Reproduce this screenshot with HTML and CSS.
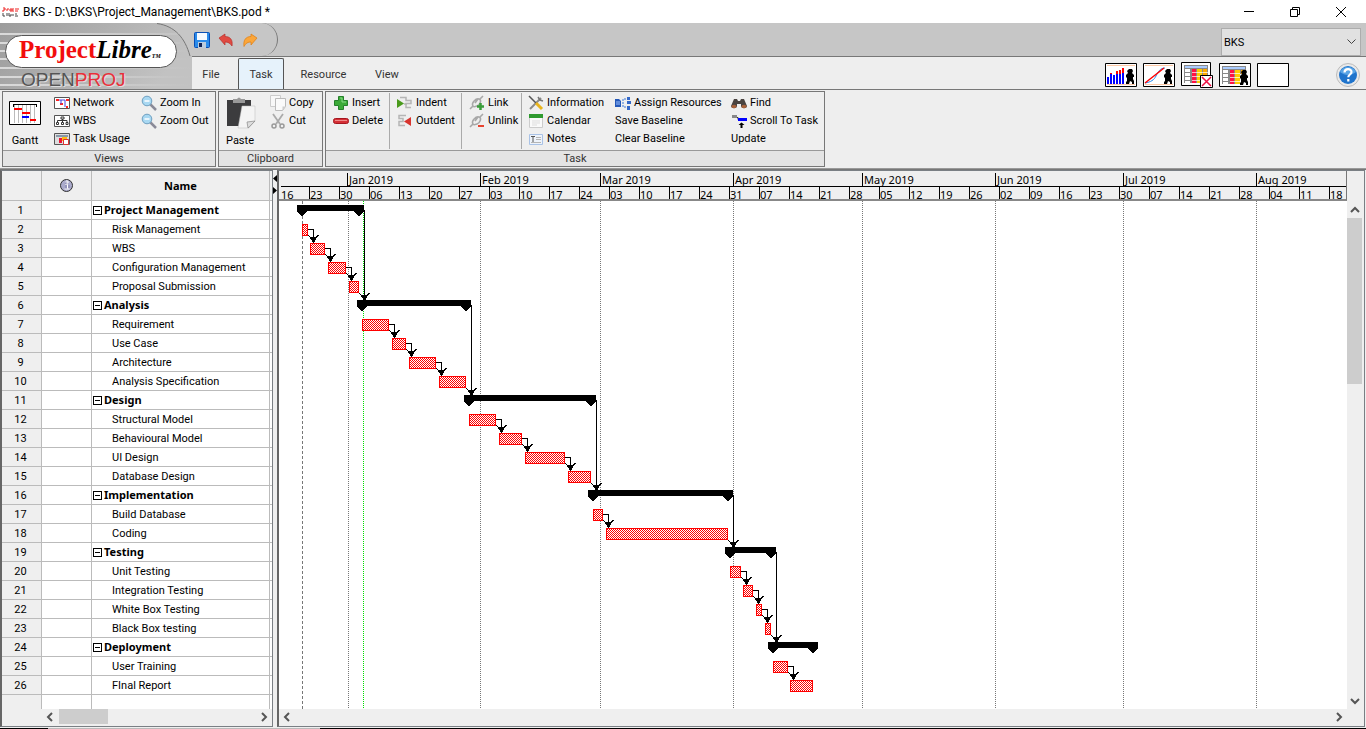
FILE: index.html
```html
<!DOCTYPE html>
<html lang="en">
<head>
<meta charset="utf-8">
<title>BKS - ProjectLibre</title>
<link rel="stylesheet" href="styles.css">
</head>
<body>
<header class="titlebar">
  <svg class="app-icon" width="17" height="10" viewBox="0 0 17 10"><path d="M1 1h2v2H1v2M5 2v2M5 2h2M8 2h2v2H8zM11 1v4M13 2h2M13 4h3M16 1v2" stroke="#e22" fill="none"/><path d="M1 6v3h2M5 6v3M7 6v3h2V7M11 7v2M13 7h2M13 9h3" stroke="#444" fill="none"/></svg>
  <h1 class="title">BKS - D:\BKS\Project_Management\BKS.pod *</h1>
  <div class="window-controls">
    <button class="wc" aria-label="Minimize"><svg width="12" height="12"><path d="M1 5.5h10" stroke="#000"/></svg></button>
    <button class="wc" aria-label="Restore"><svg width="12" height="12"><path d="M1.5 3.500h7v7h-7zM3.500 3.500v-2h7v7h-2" fill="none" stroke="#000"/></svg></button>
    <button class="wc" aria-label="Close"><svg width="12" height="12"><path d="M1 1l10 10M11 1L1 11" stroke="#000"/></svg></button>
  </div>
</header>

<div class="banner">
  <div class="brand">
    <svg class="brand-bg" width="192" height="67" viewBox="0 0 192 67">
      <defs>
        <linearGradient id="bg" x1="0" x2="1" y1="0" y2="0.3"><stop offset="0" stop-color="#9c9c9c"/><stop offset="1" stop-color="#c2c2c2"/></linearGradient>
        <linearGradient id="st" x1="0" x2="1" y1="0" y2="0"><stop offset="0" stop-color="#dadada"/><stop offset="1" stop-color="#c2c2c2"/></linearGradient>
      </defs>
      <path d="M0 0h192v67H0z" fill="url(#bg)"/>
      <path d="M0 10h180v2H0zM0 19h180v2H0zM0 27h188v2H0zM0 35h192v2H0zM0 44h192v2H0zM0 53h192v2H0zM0 61h192v2H0z" fill="url(#st)"/>
      <path d="M157 0C175 3 185 15 190 33H192V0z" fill="#c6c6c6"/>
      <path d="M157 0.500C175 3 185 15 190 33" fill="none" stroke="#777"/>
      <path d="M0 66.500h192" stroke="#777"/>
    </svg>
    <div class="logo"><span class="logo-red">Project</span><span class="logo-black">Libre</span><span class="logo-tm">TM</span></div>
    <div class="sublogo">OPEN<span>PROJ</span></div>
  </div>
  <div class="quickbar">
    <div class="quick-actions">
      <button aria-label="Save"><svg width="16" height="16"><rect x=".5" y=".5" width="15" height="15" rx="1" fill="#2a8bea" stroke="#0a4fb5"/><path d="M3 1h10v7H3z" fill="#f4f9ff"/><path d="M4 10h8v6H4z" fill="#bcd"/><path d="M5 11h3v4H5z" fill="#125"/></svg></button>
      <button aria-label="Undo"><svg width="16" height="16"><path d="M1 6l6-4v2.500c5 0 8 3 7 9.500-2-3-4-4-7-4v3z" fill="#e04a42" stroke="#b62f2a" stroke-width=".7"/></svg></button>
      <button aria-label="Redo"><svg width="16" height="16"><path d="M15 6L9 2v2.500C4 4.500 1 8 2 14.500c2-3.500 4-4.500 7-4.500v3z" fill="#fba63a" stroke="#dd7d12" stroke-width=".7"/></svg></button>
    </div>
    <select class="project-select" aria-label="Project"><option>BKS</option></select>
  </div>
  <nav class="tabs">
    <button class="tab tab-file">File</button>
    <button class="tab tab-active">Task</button>
    <button class="tab tab-resource">Resource</button>
    <button class="tab tab-view">View</button>
    <div class="view-icons">
      <button aria-label="Histogram"><svg width="32" height="24"><path d="M.5.500h31v23H.5z" fill="#fff" stroke="#000"/><path d="M2 2.500h28M2 21.500h28" stroke="#fdc9a6"/><path d="M3 21v-7M6 21V11M9 21v-9M12 21V11M15 21V11M18 21V10" stroke="#00f" stroke-width="2"/><path d="M6 11v-1M12 11V8M15 11V7M18 10V5" stroke="#f00" stroke-width="2"/><path d="M24 6h3l1 2-1 2 2 2v2h-1v2l1 2v3h-2v-2l-2-1-1 3h-3v-2l1-1v-3l-1-1v-2l2-2-1-2z"/></svg></button>
      <button aria-label="Charts"><svg width="32" height="24"><path d="M.5.500h31v23H.5z" fill="#fff" stroke="#000"/><path d="M2 2.500h28M2 21.500h28" stroke="#fdc9a6"/><path d="M2 20c6-1 9-3 11-7s4-8 9-8" stroke="#28e" fill="none"/><path d="M2 20l14-11 5-4" stroke="#f00" fill="none" stroke-width="1.500"/><path d="M24 6h3l1 2-1 2 2 2v2h-1v2l1 2v3h-2v-2l-2-1-1 3h-3v-2l1-1v-3l-1-1v-2l2-2-1-2z"/></svg></button>
      <button aria-label="Hide task usage"><svg width="32" height="26"><path d="M.5.500h29v23H.5z" fill="#fff" stroke="#000"/><path d="M3 3h24v18H3z" fill="#888"/><path d="M4 4h22v2H4z" fill="#acf"/><path d="M4 7h5v14H4z" fill="#fff"/><path d="M11 7h4v14h-4z" fill="#f14"/><path d="M16 7h5v14h-5z" fill="#fc0"/><path d="M22 7h4v14h-4z" fill="#fa0"/><path d="M4 10.500h5M4 14.500h5M4 18.500h5" stroke="#888"/><path d="M11 10.500h16M11 14.500h16M11 18.500h16" stroke="#fff" stroke-opacity=".7"/><path d="M19.500 13.500h12v12h-12z" fill="#fff" stroke="#000"/><path d="M21 15l9 9M30 15l-9 9" stroke="#e14" stroke-width="1.500"/></svg></button>
      <button aria-label="Resource usage"><svg width="32" height="24"><path d="M.5.500h31v23H.5z" fill="#fff" stroke="#000"/><path d="M3 3h24v18H3z" fill="#888"/><path d="M4 4h22v2H4z" fill="#acf"/><path d="M4 7h5v14H4z" fill="#fff"/><path d="M11 7h4v14h-4z" fill="#f14"/><path d="M16 7h5v14h-5z" fill="#fc0"/><path d="M22 7h5v4h-5z" fill="#fa0"/><path d="M21 11h7v11h-7z" fill="#fff"/><path d="M4 10.500h5M4 14.500h5M4 18.500h5" stroke="#888"/><path d="M11 10.500h10M11 14.500h10M11 18.500h10" stroke="#fff" stroke-opacity=".7"/><path d="M24 7h3l1 2-1 2 2 2v2h-1v2l1 2v3h-2v-2l-2-1-1 3h-3v-2l1-1v-3l-1-1v-2l2-2-1-2z"/></svg></button>
      <button aria-label="No sub view"><svg width="32" height="24"><path d="M.5.500h31v23H.5z" fill="#fff" stroke="#000"/></svg></button>
      <button class="help" aria-label="Help"><svg width="24" height="24"><circle cx="12" cy="12" r="11.500" fill="#e9e9e9" stroke="#bbb"/><circle cx="12" cy="12" r="9" fill="#1f74cc"/><path d="M4 9a9 9 0 0 1 16 0c-5 4-11 4-16 0z" fill="#5aa5e6"/><path d="M8.500 9.500c0-4.500 7-4.500 7-.5 0 2.500-3.200 2.500-3.200 5.200M12.300 16v2.500" fill="none" stroke="#fff" stroke-width="2.200"/></svg></button>
    </div>
  </nav>
</div>

<div class="ribbon">
  <section class="group">
    <div class="group-body">
      <button class="big big-gantt"><svg width="32" height="24"><path d="M.5.500h31v23H.5z" fill="#fff" stroke="#000"/><path d="M5.500 4v18M9.500 4v18M13.500 4v18M17.500 4v18M21.500 4v18M25.500 4v18" stroke="#bbb"/><path d="M4 3.500h24M4.500 3v3M27.500 3v3" stroke="#000"/><path d="M5 8h8M13 12h8M21 19h6" stroke="#f00" stroke-width="2"/><path d="M13 16h7" stroke="#00f" stroke-width="2"/></svg>Gantt</button>
      <div class="col col-views">
        <button class="cmd"><svg width="16" height="16"><path d="M.5 2.500h15v11H.5z" fill="#fff" stroke="#555"/><path d="M2 5h3M6 9h3M12 12h2M12 5h3" stroke="#f22" stroke-width="2"/><path d="M5 5h2v4M7 5h4v7" stroke="#44d" fill="none"/></svg>Network</button>
        <button class="cmd"><svg width="16" height="16"><path d="M.5 2.500h15v11H.5z" fill="#fff" stroke="#555"/><path d="M7 4h3v2H7zM2.500 9.500h2v2h-2zM7.500 9.500h2v2h-2zM12 9.500h2v2h-2zM8.500 6v3M3.500 9V7.500h9.500V9" stroke="#333" fill="none"/></svg>WBS</button>
        <button class="cmd"><svg width="16" height="16"><path d="M.5 2.500h15v11H.5z" fill="#ddd" stroke="#555"/><path d="M2 5h12" stroke="#89a" stroke-width="2"/><path d="M5 7h3v5H5z" fill="#e13"/><path d="M8 6h5v4H8z" fill="#fb1"/><path d="M9.500 8.500h5v5h-5z" fill="#fff" stroke="#d33"/></svg>Task Usage</button>
      </div>
      <div class="col">
        <button class="cmd"><svg width="16" height="16"><path d="M9 9l6 6" stroke="#8a8a98" stroke-width="2.500"/><circle cx="6" cy="6" r="4.800" fill="#a8d8f2" stroke="#6f9fc0"/><path d="M3.500 6h5" stroke="#fff" stroke-width="1.500"/></svg>Zoom In</button>
        <button class="cmd"><svg width="16" height="16"><path d="M9 9l6 6" stroke="#8a8a98" stroke-width="2.500"/><circle cx="6" cy="6" r="4.800" fill="#a8d8f2" stroke="#6f9fc0"/><path d="M3.500 6h5" stroke="#fff" stroke-width="1.500"/></svg>Zoom Out</button>
      </div>
    </div>
    <h2 class="group-label">Views</h2>
  </section>
  <section class="group group-clip">
    <div class="group-body">
      <button class="big big-paste"><svg width="32" height="32"><path d="M3 3h24v26H3z" fill="#3c3c3e"/><path d="M9 2h4q2-3 4 0h4v4H9z" fill="#999"/><path d="M18 9h13v15l-6 7H14z" fill="#f4f4f4" stroke="#bbb" stroke-width=".5"/><path d="M31 24l-7 7-1-6z" fill="#ddd" stroke="#888" stroke-width=".7"/></svg>Paste</button>
      <div class="col">
        <button class="cmd"><svg width="16" height="16"><path d="M.5.500h10v11H.5z" fill="#f8f8f8" stroke="#ccc"/><path d="M5.500 3.500h10v8l-3 4h-7z" fill="#fafafa" stroke="#bbb"/><path d="M15.500 11.500l-3 4v-4z" fill="#ccc"/></svg>Copy</button>
        <button class="cmd"><svg width="16" height="16"><path d="M3 1l7 10M13 1L6 11" stroke="#aaa" stroke-width="1.800"/><circle cx="4" cy="13" r="2" fill="none" stroke="#999" stroke-width="1.500"/><circle cx="12" cy="13" r="2" fill="none" stroke="#999" stroke-width="1.500"/></svg>Cut</button>
      </div>
    </div>
    <h2 class="group-label">Clipboard</h2>
  </section>
  <section class="group group-task">
    <div class="group-body">
      <div class="col col-insert">
        <button class="cmd"><svg width="16" height="16"><path d="M5.500 1.500h5v4h4v5h-4v4h-5v-4h-4v-5h4z" fill="#3cab38" stroke="#25802a"/><path d="M7 3h2v4h4" fill="none" stroke="#8d8"/></svg>Insert</button>
        <button class="cmd"><svg width="16" height="16"><rect x=".5" y="5.500" width="15" height="5" rx="2" fill="#d42f35" stroke="#a5161f"/><path d="M2 7.500h12" stroke="#f08a8a"/></svg>Delete</button>
      </div>
      <div class="col col-indent">
        <button class="cmd"><svg width="16" height="16"><path d="M3 2.500h6v3h5v3H9v4h5M7 9h3" fill="none" stroke="#b5b5b5" stroke-width="1.500"/><path d="M0 4l7 4.500L0 13z" fill="#4a9a1c"/></svg>Indent</button>
        <button class="cmd"><svg width="16" height="16"><path d="M9 2.500H2v3h4v3H2v4h6" fill="none" stroke="#b5b5b5" stroke-width="1.500"/><path d="M14 4L7 8.500l7 4.500z" fill="#d8342e"/></svg>Outdent</button>
      </div>
      <div class="col col-link">
        <button class="cmd"><svg width="16" height="16"><path d="M1 14l3-3M11 4l3-3M4 11c-2-3 3-8 6-7s1 6-2 7-3 1-4 0zM6 8l3-4" fill="none" stroke="#a8a8a8" stroke-width="1.600"/><path d="M11.500 8v7M8 11.500h7" stroke="#3a9d3a" stroke-width="2.500"/></svg>Link</button>
        <button class="cmd"><svg width="16" height="16"><path d="M1 14l3-3M11 4l3-3M4 11c-2-3 3-8 6-7s1 6-2 7-3 1-4 0zM6 8l3-4" fill="none" stroke="#a8a8a8" stroke-width="1.600"/><path d="M9 13h6" stroke="#e8432e" stroke-width="2"/></svg>Unlink</button>
      </div>
      <div class="col col-info">
        <button class="cmd"><svg width="16" height="16"><path d="M2 14L13 3" stroke="#8b8b8b" stroke-width="2"/><path d="M10 2l2 3 3 1" fill="none" stroke="#777" stroke-width="1.500"/><path d="M1 1l7 7" stroke="#555" stroke-width="1.500"/><path d="M8 8l6 6" stroke="#e9b41d" stroke-width="3"/></svg>Information</button>
        <button class="cmd"><svg width="16" height="16"><path d="M1.500 2.500h13v12h-13z" fill="#fafafa" stroke="#ccc"/><path d="M1 1h14v4H1z" fill="#2f9a2f"/><path d="M4 8h8M4 10h8M4 12h5" stroke="#ddd"/></svg>Calendar</button>
        <button class="cmd"><svg width="16" height="16"><path d="M1.500 3.500h13v10h-13z" fill="#eef3fa" stroke="#a9c2e6"/><path d="M3 5.500h4M5 5v6" stroke="#555"/><path d="M8 6.500h5M8 8.500h5M3 11.500h10" stroke="#b5b5b5"/></svg>Notes</button>
      </div>
      <div class="col col-assign">
        <button class="cmd"><svg width="16" height="16"><path d="M0 4h4l2 2v6H0z" fill="#2458b8"/><path d="M1 7h4M1 9h4" stroke="#9bc0ff"/><path d="M11 4H8v8h3" fill="none" stroke="#3a76d6" stroke-dasharray="2 1"/><path d="M12 2h3v3h-3zM12 6h4v3h-4zM12 11h3v4h-3z" fill="#3468c8"/></svg>Assign Resources</button>
        <button class="cmd">Save Baseline</button>
        <button class="cmd">Clear Baseline</button>
      </div>
      <div class="col">
        <button class="cmd"><svg width="16" height="16"><path d="M3 4h3l1 2h2l1-2h3l3 7c0 3-6 3-6 0V9H6v2c0 3-6 3-6 0z" fill="#4a4340"/><ellipse cx="3" cy="11.500" rx="2.500" ry="1.800" fill="#a8623c"/><ellipse cx="13" cy="11.500" rx="2.500" ry="1.800" fill="#a8623c"/></svg>Find</button>
        <button class="cmd"><svg width="16" height="16"><path d="M1 3.500h5" stroke="#888" stroke-width="3"/><path d="M6 4.500h1v2" stroke="#333" fill="none"/><path d="M7 6.500h9" stroke="#00f" stroke-width="3"/><path d="M10.500 9.500L7.500 12h2v3h2v-3h2z"/></svg>Scroll To Task</button>
        <button class="cmd">Update</button>
      </div>
    </div>
    <h2 class="group-label">Task</h2>
  </section>
</div>

<main class="workspace">
  <section class="sheet">
    <div class="sheet-view">
    <table>
      <colgroup><col class="c-num"><col class="c-info"><col class="c-name"><col></colgroup>
      <thead><tr><th></th><th><svg class="info" width="15" height="15"><circle cx="7.500" cy="7.500" r="6" fill="#aaaacb" stroke="#333"/><path d="M6 6.500h2.500v4M5.500 11h5M7 3v2h2V3z" fill="none" stroke="#fff"/><path d="M7 3.500v7M10 7v3" stroke="#558" stroke-width=".5"/></svg></th><th>Name</th><th></th></tr></thead>
      <tbody>
        <tr class="sum"><th>1</th><td></td><td><i class="box"></i>Project Management</td><td></td></tr>
        <tr><th>2</th><td></td><td>Risk Management</td><td></td></tr>
        <tr><th>3</th><td></td><td>WBS</td><td></td></tr>
        <tr><th>4</th><td></td><td>Configuration Management</td><td></td></tr>
        <tr><th>5</th><td></td><td>Proposal Submission</td><td></td></tr>
        <tr class="sum"><th>6</th><td></td><td><i class="box"></i>Analysis</td><td></td></tr>
        <tr><th>7</th><td></td><td>Requirement</td><td></td></tr>
        <tr><th>8</th><td></td><td>Use Case</td><td></td></tr>
        <tr><th>9</th><td></td><td>Architecture</td><td></td></tr>
        <tr><th>10</th><td></td><td>Analysis Specification</td><td></td></tr>
        <tr class="sum"><th>11</th><td></td><td><i class="box"></i>Design</td><td></td></tr>
        <tr><th>12</th><td></td><td>Structural Model</td><td></td></tr>
        <tr><th>13</th><td></td><td>Behavioural Model</td><td></td></tr>
        <tr><th>14</th><td></td><td>UI Design</td><td></td></tr>
        <tr><th>15</th><td></td><td>Database Design</td><td></td></tr>
        <tr class="sum"><th>16</th><td></td><td><i class="box"></i>Implementation</td><td></td></tr>
        <tr><th>17</th><td></td><td>Build Database</td><td></td></tr>
        <tr><th>18</th><td></td><td>Coding</td><td></td></tr>
        <tr class="sum"><th>19</th><td></td><td><i class="box"></i>Testing</td><td></td></tr>
        <tr><th>20</th><td></td><td>Unit Testing</td><td></td></tr>
        <tr><th>21</th><td></td><td>Integration Testing</td><td></td></tr>
        <tr><th>22</th><td></td><td>White Box Testing</td><td></td></tr>
        <tr><th>23</th><td></td><td>Black Box testing</td><td></td></tr>
        <tr class="sum"><th>24</th><td></td><td><i class="box"></i>Deployment</td><td></td></tr>
        <tr><th>25</th><td></td><td>User Training</td><td></td></tr>
        <tr><th>26</th><td></td><td>FInal Report</td><td></td></tr>
        <tr class="rest"><th></th><td></td><td></td><td></td></tr>
      </tbody>
    </table>
    </div>
    <div class="hscroll hscroll-sheet">
      <svg width="16" height="16"><path d="M10 4L6 8l4 4" class="chev"/></svg><span class="thumb"></span><svg class="end" width="16" height="16"><path d="M6 4l4 4-4 4" class="chev"/></svg>
    </div>
  </section>

  <div class="splitter"><svg width="4" height="24"><path d="M4 3v7L0 6.500zM0 15v7l4-3.500z"/></svg></div>

  <section class="gantt">
    <div class="gantt-main">
      <div class="timeline">
        <div class="months">
          <span class="lead"></span>
          <span style="width:133px">Jan 2019</span><span style="width:120px">Feb 2019</span><span style="width:133px">Mar 2019</span><span style="width:129px">Apr 2019</span><span style="width:133px">May 2019</span><span style="width:128px">Jun 2019</span><span style="width:133px">Jul 2019</span><span style="width:90px">Aug 2019</span>
        </div>
        <div class="weeks">
          <span>16</span><span>23</span><span>30</span><span>06</span><span>13</span><span>20</span><span>27</span><span>03</span><span>10</span><span>17</span><span>24</span><span>03</span><span>10</span><span>17</span><span>24</span><span>31</span><span>07</span><span>14</span><span>21</span><span>28</span><span>05</span><span>12</span><span>19</span><span>26</span><span>02</span><span>09</span><span>16</span><span>23</span><span>30</span><span>07</span><span>14</span><span>21</span><span>28</span><span>04</span><span>11</span><span>18</span>
        </div>
      </div>
      <div class="chart">
      <svg width="1068" height="508" viewBox="279 201 1068 508" shape-rendering="crispEdges" role="img" aria-label="Gantt chart">
        <defs>
          <pattern id="hatch" width="2" height="2" patternUnits="userSpaceOnUse"><path d="M0 0h2v2H0z" fill="#fff"/><path d="M0 0h1v1H0zM1 1h1v1H1z" fill="#f00"/></pattern>
          <path id="cap" d="M0 0h10v1h-1v1h-1v1h-1v1h-1v1h-2v-1h-1v-1h-1v-1h-1v-1H0z"/>
          <path id="arrow" d="M-5-8h1v1h-1zM-4-7h1v1h-1zM4-8h2v1h-2zM3-7h2v1h-2zM-3-6h7v1h-7zM-3-5h6v1h-6zM-2-4h5v1h-5zM-1-3h3v2h-3zM0-1h1v1h-1z"/>
          <g id="elbow"><path d="M-5 -13.500H.5V-1" fill="none" stroke="#000"/><use href="#arrow"/></g>
        </defs>
        <g fill="none" stroke="#777">
          <path d="M302.500 201v508" stroke-dasharray="3 2"/>
          <path stroke-dasharray="1 1" d="M348.500 201v508M480.500 201v508M600.500 201v508M733.500 201v508M862.500 201v508M995.500 201v508M1123.500 201v508M1256.500 201v508"/>
          <path d="M363.500 201v508" stroke="#0d0" stroke-dasharray="1 1"/>
        </g>
        <g>
          <path d="M297 205h67v6h-67zM357 300h114v6H357zM464 395h132v6H464zM588 490h145v6H588zM725 547h51v6h-51zM768 642h50v6h-50z"/>
          <use href="#cap" x="297" y="211"/><use href="#cap" x="354" y="211"/>
          <use href="#cap" x="357" y="306"/><use href="#cap" x="461" y="306"/>
          <use href="#cap" x="464" y="401"/><use href="#cap" x="586" y="401"/>
          <use href="#cap" x="588" y="496"/><use href="#cap" x="723" y="496"/>
          <use href="#cap" x="725" y="553"/><use href="#cap" x="766" y="553"/>
          <use href="#cap" x="768" y="648"/><use href="#cap" x="808" y="648"/>
        </g>
        <g fill="url(#hatch)" stroke="#f00">
          <path d="M302.500 224.500h5v11h-5zM310.500 243.500h14v11h-14zM328.500 262.500h17v11h-17zM349.500 281.500h9v11h-9z"/>
          <path d="M362.500 319.500h26v11h-26zM392.500 338.500h13v11h-13zM409.500 357.500h26v11h-26zM439.500 376.500h26v11h-26z"/>
          <path d="M469.500 414.500h26v11h-26zM499.500 433.500h22v11h-22zM525.500 452.500h39v11h-39zM568.500 471.500h22v11h-22z"/>
          <path d="M593.500 509.500h9v11h-9zM606.500 528.500h121v11h-121z"/>
          <path d="M730.500 566.500h10v11h-10zM743.500 585.500h9v11h-9zM756.500 604.500h5v11h-5zM765.500 623.500h5v11h-5z"/>
          <path d="M773.500 661.500h14v11h-14zM790.500 680.500h22v11h-22z"/>
        </g>
        <g>
          <use href="#elbow" x="313" y="243"/><use href="#elbow" x="330" y="262"/><use href="#elbow" x="351" y="281"/>
          <use href="#elbow" x="394" y="338"/><use href="#elbow" x="411" y="357"/><use href="#elbow" x="441" y="376"/>
          <use href="#elbow" x="501" y="433"/><use href="#elbow" x="527" y="452"/><use href="#elbow" x="570" y="471"/>
          <use href="#elbow" x="608" y="528"/>
          <use href="#elbow" x="746" y="585"/><use href="#elbow" x="758" y="604"/><use href="#elbow" x="767" y="623"/>
          <use href="#elbow" x="793" y="680"/>
          <path d="M364.500 210v90M471.500 305v90M596.500 400v90M733.500 495v52M776.500 552v90" stroke="#000"/>
          <use href="#arrow" x="364" y="301"/><use href="#arrow" x="471" y="396"/><use href="#arrow" x="596" y="491"/><use href="#arrow" x="733" y="548"/><use href="#arrow" x="776" y="643"/>
        </g>
      </svg>
      </div>
      <div class="hscroll">
        <svg width="16" height="16"><path d="M10 4L6 8l4 4" class="chev"/></svg><svg class="end" width="16" height="16"><path d="M6 4l4 4-4 4" class="chev"/></svg>
      </div>
    </div>
    <div class="vscroll">
      <svg width="16" height="16"><path d="M4 10l4-4 4 4" class="chev"/></svg><span class="vthumb"></span><svg class="vend" width="16" height="16"><path d="M4 6l4 4 4-4" class="chev"/></svg>
    </div>
  </section>
</main>
<footer class="edge"></footer>
</body>
</html>
```

FILE: styles.css
```css
* { box-sizing: border-box; }
body {
  margin: 0;
  height: 100vh;
  display: flex;
  flex-direction: column;
  overflow: hidden;
  background: #efefef;
  color: #000;
  font: 11px/18px Roboto, "Noto Sans", sans-serif;
}
button {
  font: inherit;
  color: inherit;
  border: 0;
  padding: 0;
  background: none;
  white-space: nowrap;
}
svg { display: block; flex: none; }
h1, h2 { margin: 0; font-weight: normal; }

.titlebar { display: flex; align-items: center; height: 23px; padding: 0 3px 0 2px; background: #fff; }
.app-icon { margin-right: 4px; }
.title { font-size: 12px; line-height: 22px; }
.window-controls { display: flex; margin-left: auto; }
.wc { width: 46px; height: 21px; display: flex; align-items: center; justify-content: center; }
.wc:last-child { width: 45px; }

.banner { display: grid; grid-template-columns: 192px 1fr; grid-template-rows: 34px 33px; }
.brand { grid-row: 1 / 3; position: relative; padding: 12px 0 0 5px; }
.brand-bg { position: absolute; left: 0; top: 0; }
.logo {
  position: relative;
  width: 172px;
  height: 33px;
  padding-left: 13px;
  border: 1px solid #555;
  border-radius: 17px;
  background: #fff;
  font: bold 25px/28px "Liberation Serif", serif;
  white-space: nowrap;
}
.logo-red { color: #f20d0d; }
.logo-black { font-style: italic; }
.logo-tm { font-size: 6px; font-style: italic; }
.sublogo {
  position: relative;
  padding: 2px 0 0 16px;
  color: #555;
  font: 19px/20px "Liberation Sans", sans-serif;
  text-shadow: 1px 1px 0 #ddd;
}
.sublogo span { color: #e8303a; }

.quickbar { display: flex; justify-content: space-between; background: #c6c6c6; border-bottom: 1px solid #777; }
.quick-actions {
  display: flex;
  gap: 8px;
  width: 86px;
  padding: 9px 0 0 2px;
  border-right: 1px solid #777;
  border-radius: 0 17px 17px 0;
}
.quick-actions button { height: 16px; }
.project-select {
  appearance: none;
  align-self: flex-end;
  width: 140px;
  height: 28px;
  margin-right: 5px;
  padding: 2px 2px 0;
  border: 1px solid #adadad;
  border-radius: 0;
  color: #000;
  font: inherit;
  background: #e1e1e1 url("data:image/svg+xml,%3Csvg xmlns='http://www.w3.org/2000/svg' width='9' height='6'%3E%3Cpath d='M.5.500l4 4 4-4' fill='none' stroke='%23444'/%3E%3C/svg%3E") right 4px center no-repeat;
}

.tabs { display: flex; align-items: stretch; background: #eee; border-bottom: 1px solid #777; color: #333; }
.tab { padding: 3px 0 0; }
.tab-file { width: 46px; padding-right: 8px; }
.tab-active { width: 46px; margin-top: 1px; padding-top: 1px; border: 1px solid #555; border-bottom: 0; border-radius: 2px 2px 0 0; background: #e6f2fb; }
.tab-resource { width: 79px; }
.tab-view { width: 48px; }
.view-icons { display: flex; align-items: flex-start; gap: 6px; margin-left: auto; padding: 6px 6px 0 0; }
.view-icons button:nth-child(3) { margin-top: -1px; }
.view-icons .help { margin-left: 41px; }

.ribbon { display: flex; gap: 2px; height: 79px; padding: 1px 2px; border-bottom: 1px solid #999; background: #eee; }
.group { display: flex; flex-direction: column; width: 214px; border: 1px solid #777; background: #efefef; }
.group-clip { width: 105px; }
.group-task { width: 500px; }
.group-body { display: flex; flex: 1; padding-top: 1px; }
.group-label { height: 16px; border-top: 1px solid #999; background: #e4e4e4; color: #333; font-size: 11px; line-height: 16px; text-align: center; }
.big { display: flex; flex-direction: column; justify-content: space-between; align-items: center; height: 56px; line-height: 16px; }
.big-gantt { width: 44px; padding-top: 8px; margin-right: 7px; }
.big-paste { width: 42px; padding-top: 4px; margin-right: 9px; }
.col { display: flex; flex-direction: column; align-items: flex-start; height: 56px; }
.cmd { display: flex; align-items: center; gap: 3px; height: 18px; line-height: 20px; }
.col-views { width: 87px; }
.col-insert { width: 57px; margin-left: 7px; border-right: 1px solid #aaa; }
.col-indent { width: 72px; padding-left: 7px; border-right: 1px solid #aaa; }
.col-link { width: 60px; padding-left: 7px; border-right: 1px solid #aaa; }
.col-info { width: 93px; padding-left: 6px; }
.col-assign { width: 116px; }
.cmd { padding-top: 1px; }

.workspace { flex: 1; display: flex; min-height: 0; border-top: 1px solid #777; }
.sheet { display: flex; flex-direction: column; width: 273px; border: 1px solid #7a7f84; border-left: 2px solid #666; background: #fff; }
.sheet-view { flex: 1; min-height: 0; overflow: hidden; }
table { width: 100%; height: 100%; table-layout: fixed; border-collapse: separate; border-spacing: 0; }
.c-num { width: 40px; }
.c-info { width: 50px; }
.c-name { width: 178px; }
th, td { height: 19px; padding: 2px 0 0; border-right: 1px solid #bbb; border-bottom: 1px solid #bbb; line-height: 16px; vertical-align: top; white-space: nowrap; }
td:last-child, thead th:last-child { border-right: 0; }
th { background: #efefef; font-weight: normal; text-align: center; }
tbody th { padding-right: 2px; }
thead th { height: 30px; padding: 0; font-family: "Noto Sans", sans-serif; font-weight: bold; vertical-align: middle; }
.info { margin: 0 auto; }
td:nth-child(3) { padding-left: 20px; }
.sum td:nth-child(3) { padding: 0 0 0 1px; font-family: "Noto Sans", sans-serif; font-weight: bold; line-height: 18px; }
.box { display: inline-block; width: 9px; height: 9px; margin-right: 2px; border: 1px solid #000; background: linear-gradient(#000, #000) center / 5px 1px no-repeat; vertical-align: -1px; }
.rest th, .rest td { height: auto; border-bottom: 0; }

.hscroll { display: flex; height: 17px; background: #efefef; }
.hscroll-sheet { padding-left: 40px; }
.thumb { width: 49px; height: 15px; margin-left: 1px; background: #cdcdcd; }
.end { margin-left: auto; }
.chev { fill: none; stroke: #555; stroke-width: 2; }

.splitter { width: 4px; padding-top: 2px; background: #efefef; }

.gantt { flex: 1; display: flex; min-width: 0; margin-right: 1px; border: 1px solid #7a7f84; border-left: 2px solid #666; }
.gantt-main { flex: 1; display: flex; flex-direction: column; min-width: 0; background: #fff; }
.timeline { height: 30px; overflow: hidden; padding: 2px 0 0 2px; border-right: 1px solid #777; border-bottom: 2px solid #888; background: #efefef; font: 11px/14px "Noto Sans", sans-serif; }
.months, .weeks { display: flex; }
.months { height: 14px; border-bottom: 1px solid #000; }
.months span, .weeks span { flex: none; border-left: 1px solid #000; }
.months span { padding-left: 1px; }
.months .lead { width: 66px; border: 0; }
.months span:last-child { flex: 1; }
.weeks { height: 13px; line-height: 15px; }
.weeks span { width: 30px; }
.weeks span:first-child { width: 28px; border: 0; }
.weeks span:last-child { flex: 1 0 17px; }
.chart { flex: 1; min-height: 0; overflow: hidden; }
.vscroll { display: flex; flex-direction: column; width: 17px; padding: 31px 0 17px; background: #efefef; }
.vthumb { width: 15px; height: 166px; background: #cdcdcd; }
.vend { margin-top: auto; }
.edge { height: 2px; background: linear-gradient(90deg, #000 48px, #bbb 48px, #bbb 320px, #000 320px) bottom / 100% 1px no-repeat; }
```
